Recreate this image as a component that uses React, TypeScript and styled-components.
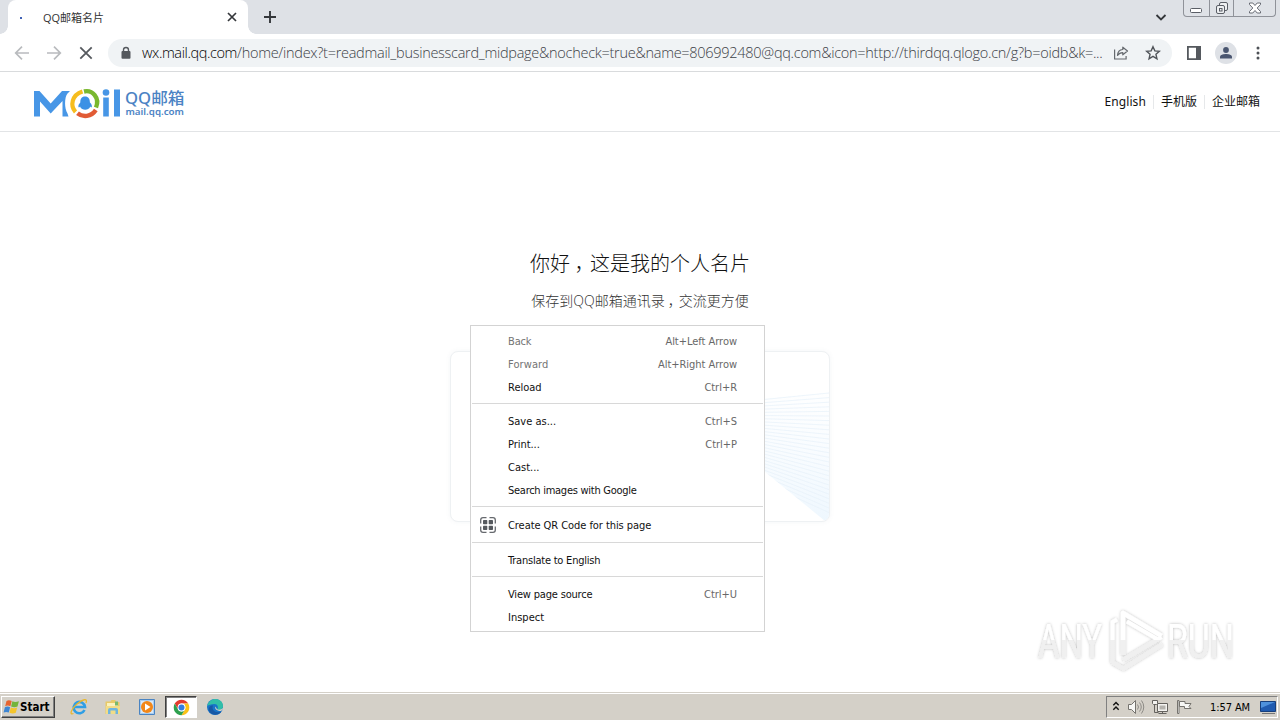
import React from 'react';
import styled, { createGlobalStyle } from 'styled-components';

const GlobalStyle = createGlobalStyle`
    * {
        box-sizing: border-box;
    }

    body {
        margin: 0;
        overflow: hidden;
        background: #fff;
        font-family: 'DejaVu Sans Condensed', 'Noto Sans CJK SC', sans-serif;
        font-size: 11px;
        color: #000;
    }

    svg {
        display: block;
        flex: none;
    }
`;

const Screen = styled.div`
    display: flex;
    flex-direction: column;
    width: 1280px;
    height: 720px;
`;

/* Browser frame */

const TabStrip = styled.div`
    display: flex;
    height: 34px;
    padding-left: 8px;
    background: #dee1e6;
`;

const Tab = styled.div`
    position: relative;
    display: flex;
    align-items: center;
    width: 240px;
    height: 34px;
    padding: 0 10px 0 11px;
    border-radius: 8px 8px 0 0;
    background: #fff;

    &::before,
    &::after {
        content: '';
        position: absolute;
        bottom: 0;
        width: 8px;
        height: 8px;
    }

    &::before {
        left: -8px;
        background: radial-gradient(circle at 0 0, #dee1e6 7.5px, #fff 8px);
    }

    &::after {
        right: -8px;
        background: radial-gradient(circle at 100% 0, #dee1e6 7.5px, #fff 8px);
    }
`;

const LoadingDot = styled.span`
    width: 2px;
    height: 2px;
    margin: 2px 21px 0 1px;
    background: #3f62b5;
`;

const TabTitle = styled.span`
    flex: 1;
    margin-top: -1px;
    font-family: 'Open Sans', 'Noto Sans CJK SC', sans-serif;
    font-size: 11px;
    color: #333;
`;

const NewTab = styled.div`
    display: flex;
    align-items: center;
    flex: 1;
    padding-left: 15px;
`;

const TabSearch = styled.div`
    display: flex;
    align-items: center;
    padding: 0 16px 0 0;
`;

const WindowButtons = styled.div`
    display: flex;
    width: 93px;
    height: 17px;
    margin-right: 4px;
    border: 1px solid #8f9299;
    border-top: 0;
    border-radius: 0 0 4px 4px;
    background: #dfe2e7;
`;

const WindowButton = styled.div<{ $width: number }>`
    display: flex;
    align-items: center;
    justify-content: center;
    width: ${props => props.$width}px;

    & + & {
        border-left: 1px solid #8f9299;
    }
`;

const Toolbar = styled.div`
    display: flex;
    align-items: center;
    height: 38px;
    padding: 0 14px;
    border-bottom: 1px solid #d9dbdd;
    background: #fff;
`;

const NavButtons = styled.div`
    display: flex;
    gap: 16px;
    margin-right: 14px;
`;

const AddressBar = styled.div`
    display: flex;
    align-items: center;
    width: 1064px;
    height: 28px;
    padding: 0 10px 0 12px;
    border-radius: 14px;
    background: #f0f3f5;
`;

const Url = styled.div`
    width: 962px;
    margin: -1px 9px 0 10px;
    font-family: 'Open Sans', sans-serif;
    font-size: 14.5px;
    font-weight: 300;
    letter-spacing: -0.28px;
    white-space: nowrap;
    color: #3c4146;
`;

const Host = styled.span`
    letter-spacing: -0.4px;
    color: #000;
`;

const BarActions = styled.div`
    display: flex;
    gap: 16px;
`;

const ToolbarActions = styled.div`
    display: flex;
    align-items: center;
    gap: 13px;
    margin-left: 14px;
`;

const Avatar = styled.div`
    display: flex;
    align-items: center;
    justify-content: center;
    width: 22px;
    height: 22px;
    border-radius: 50%;
    background: #dee1e6;
`;

/* Mail page */

const PageHeader = styled.header`
    display: flex;
    align-items: center;
    justify-content: space-between;
    height: 60px;
    padding: 0 20px 0 30px;
    border-bottom: 1px solid #e2e4e6;
`;

const HeaderLinks = styled.nav`
    display: flex;
    align-items: center;
    font-family: 'Noto Sans', 'Noto Sans CJK SC', sans-serif;
    font-size: 12px;
    line-height: 14px;
    color: #111;
`;

const HeaderLink = styled.span<{ $spacing?: number }>`
    letter-spacing: ${props => props.$spacing || 0}px;

    & + & {
        margin-left: 7px;
        padding-left: 7px;
        border-left: 1px solid #e6e8ea;
    }
`;

const Main = styled.main`
    display: flex;
    flex: 1;
    flex-direction: column;
    align-items: center;
    padding-top: 117px;
    font-family: 'Open Sans', 'Noto Sans CJK SC', sans-serif;
    font-weight: 300;
`;

const Title = styled.h1`
    margin: 0;
    font-size: 20px;
    font-weight: 300;
    line-height: 30px;
    color: #111;
`;

const Subtitle = styled.p`
    margin: 11px 0 0;
    font-size: 14px;
    line-height: 22px;
    color: #333;
`;

/* Centres the full-width comma in its cell */
const Comma = styled.span`
    margin: 0 -0.22em 0 0.22em;
`;

const CardArea = styled.div`
    position: relative;
    margin-top: 39px;
`;

const Card = styled.div`
    display: flex;
    justify-content: flex-end;
    width: 380px;
    height: 171px;
    overflow: hidden;
    border: 1px solid #eef1f3;
    border-radius: 8px;
    background: #fff;
    box-shadow: 0 0 5px rgba(100, 120, 140, 0.07);
`;

const ContextMenu = styled.div`
    position: absolute;
    top: -26px;
    left: 20px;
    width: 295px;
    height: 307px;
    padding: 4px 1px 0;
    border: 1px solid #d3d3d3;
    background: #fff;
    font-family: 'DejaVu Sans Condensed', sans-serif;
    font-weight: 400;
    font-size: 11px;
`;

const MenuItem = styled.div<{ $disabled?: boolean; $tall?: boolean }>`
    display: flex;
    align-items: center;
    height: ${props => (props.$tall ? 25 : 23)}px;
    padding-right: 26px;
    color: ${props => (props.$disabled ? '#747474' : '#111')};
`;

const MenuIcon = styled.span`
    width: 36px;
    padding: 0 0 1px 8px;
`;

const MenuLabel = styled.span<{ $spacing: number }>`
    flex: 1;
    letter-spacing: ${props => props.$spacing}px;
`;

const Shortcut = styled.span`
    letter-spacing: -0.03px;
    color: #686868;
`;

const Separator = styled.div`
    height: 1px;
    margin: 4px 0 6px;
    background: #d8d8d8;
`;

const Watermark = styled.div`
    position: absolute;
    top: 604px;
    left: 1030px;
`;

/* Windows taskbar */

const Taskbar = styled.footer`
    display: flex;
    align-items: center;
    height: 28px;
    padding: 1px 0 0 1px;
    border-top: 1px solid #d4d0c8;
    background: #d4d0c8;
    box-shadow: inset 0 1px #fff;
`;

const StartButton = styled.div`
    display: flex;
    align-items: center;
    width: 54px;
    height: 22px;
    padding-left: 1px;
    border: 1px solid;
    border-color: #fff #404040 #404040 #fff;
    box-shadow: inset -1px -1px #808080;
    font-family: 'DejaVu Sans Condensed', sans-serif;
    font-size: 11.5px;
    font-weight: 700;
`;

const QuickLaunch = styled.div`
    display: flex;
    flex: 1;
    gap: 2px;
    margin-left: 8px;
`;

const AppButton = styled.div<{ $active?: boolean }>`
    display: flex;
    align-items: center;
    justify-content: center;
    width: 32px;
    height: 22px;
    border: 1px solid ${props => (props.$active ? '#404040' : 'transparent')};
    border-right-color: ${props => (props.$active ? '#fff' : 'transparent')};
    border-bottom-color: ${props => (props.$active ? '#fff' : 'transparent')};
    background: ${props => (props.$active ? '#fff' : 'transparent')};
    box-shadow: ${props => (props.$active ? 'inset 1px 1px #808080' : 'none')};
`;

const Tray = styled.div`
    display: flex;
    align-items: center;
    width: 172px;
    height: 22px;
    margin-right: 2px;
    padding-left: 5px;
    border: 1px solid;
    border-color: #808080 #fff #fff #808080;
`;

const TrayIcons = styled.div`
    display: flex;
    align-items: center;
    gap: 7px;
    flex: 1;
`;

const Clock = styled.span`
    margin-right: 9px;
    letter-spacing: -0.1px;
`;

const ArrowIcon: React.FunctionComponent<{ forward?: boolean }> = ({ forward }) => (
    <svg width="16" height="16" viewBox="0 0 16 16" fill="none" stroke="#b9bbbe" strokeWidth="1.7">
        {forward ? <path d="M1 8h13M8 1.7 14.3 8 8 14.3" /> : <path d="M15 8H2M8 1.7 1.7 8 8 14.3" />}
    </svg>
);

const MailLogo = () => (
    <svg width="160" height="40" viewBox="30 82 160 40">
        <path d="M34 116.500V91h5.500l11.200 12.500L62 91h8l-2.500 2.500c-3.200 4-3.200 15 0 20l1 3H62.500V101l-11.800 12.500L40 101.500v15z" fill="#4796e6" />
        <g fill="none">
            <path d="M75.500 112c-5.500-6-4-17 7-20.500" stroke="#f6bd1e" strokeWidth="4.200" />
            <path d="M84 91.500c8.500-2 16 6.500 12 16" stroke="#79b82f" strokeWidth="4.400" />
            <path d="M95.800 110c-4.500 7-13 7.500-18.300 3.200" stroke="#e15b35" strokeWidth="4.400" />
        </g>
        <path d="M85 96.500c-3.500 0-4.700 2.500-4.700 6-1.500 1.600-2.300 3-1.800 4.700.5.500 1-.2 1.600-.8.5 1.500 1.300 2 2.100 2.500 1.800 1 4.200 1 6 0 .8-.5 1.500-1 2-2.500.6.600 1.200 1.300 1.600.8.500-1.700-.4-3.300-1.900-4.700 0-3.500-1.400-6-4.900-6z" fill="#3c91e5" />
        <circle cx="106" cy="92.500" r="3.300" fill="#4796e6" />
        <path d="M103.200 97.500h5.600v19h-5.600zM114 89.500h6v27h-6z" fill="#4796e6" />
        <text x="125" y="103.500" textLength="59.500" lengthAdjust="spacingAndGlyphs" fontFamily="'Noto Sans', 'Noto Sans CJK SC', sans-serif" fontSize="15.500" fontWeight="500" fill="#4b83c4">QQ邮箱</text>
        <text x="125.500" y="114.500" textLength="58.500" lengthAdjust="spacingAndGlyphs" fontFamily="'Noto Sans', sans-serif" fontSize="9.500" fontWeight="600" fill="#4b83c4">mail.qq.com</text>
    </svg>
);

const rays = Array.from({ length: 27 }, (_, i) => i);

const CardRays = () => (
    <svg width="66" height="169" viewBox="764 352 66 169">
        <defs>
            <linearGradient id="rayFill" x1="0" y1="0" x2="0" y2="1">
                <stop offset="0" stopColor="#f8fcff" stopOpacity="0.2" />
                <stop offset="1" stopColor="#eef7fe" />
            </linearGradient>
            <clipPath id="rayClip">
                <path d="M760 399l70-7v129h-4l-66-54z" />
            </clipPath>
        </defs>
        <path d="M760 399l70-7v129h-4l-66-54z" fill="url(#rayFill)" />
        <g stroke="#e6f1f9" strokeWidth="0.700" clipPath="url(#rayClip)">
            {rays.map(i => (
                <path key={i} d={`M760 ${400 + i * 3.1}L830 ${393 + i * 4.6}`} />
            ))}
        </g>
    </svg>
);

const QrIcon = () => (
    <svg width="16" height="16" viewBox="0 0 16 16">
        <path d="M.7 6.500V3Q.7.7 3 .7h3.500M9.500.7H13q2.300 0 2.300 2.300v3.500M15.300 9.500V13q0 2.300-2.300 2.300H9.500M6.500 15.300H3Q.7 15.300.7 13V9.500" fill="none" stroke="#66696e" strokeWidth="1.300" />
        <g fill="#55595e">
            <rect x="3" y="3" width="4.300" height="4.300" rx=".7" />
            <rect x="8.700" y="3" width="4.300" height="4.300" rx=".7" />
            <rect x="3" y="8.700" width="4.300" height="4.300" rx=".7" />
            <rect x="8.700" y="8.700" width="4.300" height="4.300" rx=".7" />
        </g>
    </svg>
);

const AnyRunMark = () => (
    <svg width="250" height="76" viewBox="1030 604 250 76">
        <defs>
            <filter id="markShadow" x="-10%" y="-20%" width="120%" height="140%">
                <feDropShadow dx="0" dy="0" stdDeviation="1.500" floodColor="#000" floodOpacity="0.280" />
            </filter>
            <linearGradient id="markFill" x1="0" y1="610" x2="0" y2="671" gradientUnits="userSpaceOnUse">
                <stop offset="0.500" stopColor="#fff" />
                <stop offset="0.500" stopColor="#f0f0f0" />
            </linearGradient>
        </defs>
        <g filter="url(#markShadow)">
            <g fontFamily="Roboto, sans-serif" fontSize="48" fontWeight="400" fill="url(#markFill)">
                <text x="1038" y="658" textLength="64" lengthAdjust="spacingAndGlyphs">ANY</text>
                <text x="1167" y="658" textLength="67" lengthAdjust="spacingAndGlyphs">RUN</text>
            </g>
            <g fill="none" stroke="url(#markFill)" strokeWidth="4.500" strokeLinejoin="round">
                <path d="M1123 655V613l38.500 23" />
                <path d="M1127 621.500l32 18.500" strokeWidth="4" />
                <path d="M1123 660l38.500-23" strokeWidth="4" />
                <path d="M1117 619.500l-4.500 2.500v41" strokeWidth="4" />
                <path d="M1112.500 662.500l11 6 38.500-24" strokeWidth="4" />
            </g>
        </g>
    </svg>
);

interface MenuEntry {
    label: string;
    shortcut?: string;
    disabled?: boolean;
    icon?: boolean;
    spacing?: number;
}

const menuGroups: MenuEntry[][] = [
    [
        { label: 'Back', shortcut: 'Alt+Left Arrow', disabled: true },
        { label: 'Forward', shortcut: 'Alt+Right Arrow', disabled: true, spacing: 0.1 },
        { label: 'Reload', shortcut: 'Ctrl+R', spacing: 0 },
    ],
    [
        { label: 'Save as...', shortcut: 'Ctrl+S', spacing: 0 },
        { label: 'Print...', shortcut: 'Ctrl+P', spacing: -0.05 },
        { label: 'Cast...', spacing: 0 },
        { label: 'Search images with Google', spacing: -0.27 },
    ],
    [{ label: 'Create QR Code for this page', icon: true, spacing: -0.06 }],
    [{ label: 'Translate to English', spacing: -0.22 }],
    [{ label: 'View page source', shortcut: 'Ctrl+U', spacing: -0.18 }, { label: 'Inspect', spacing: 0 }],
];

const BrowserFrame = () => (
    <>
        <TabStrip>
            <Tab>
                <LoadingDot />
                <TabTitle>QQ邮箱名片</TabTitle>
                <svg width="12" height="12" viewBox="0 0 12 12" stroke="#34373b" strokeWidth="1.7">
                    <path d="m2 2 8 8M10 2l-8 8" />
                </svg>
            </Tab>
            <NewTab>
                <svg width="14" height="14" viewBox="0 0 14 14" stroke="#34373b" strokeWidth="1.9">
                    <path d="M7 1v12M1 7h12" />
                </svg>
            </NewTab>
            <TabSearch>
                <svg width="12" height="12" viewBox="0 0 12 12" fill="none" stroke="#34373b" strokeWidth="1.8">
                    <path d="m1.500 4 4.500 4.500L10.500 4" />
                </svg>
            </TabSearch>
            <WindowButtons>
                <WindowButton $width={25}>
                    <svg width="14" height="14" viewBox="0 0 14 14" fill="#fff" stroke="#5a5e66">
                        <rect x="1.500" y="7.500" width="11" height="4" rx="1" />
                    </svg>
                </WindowButton>
                <WindowButton $width={25}>
                    <svg width="14" height="14" viewBox="0 0 14 14" fill="#eef0f2" stroke="#5a5e66">
                        <rect x="4.500" y="1.500" width="8" height="8" rx="1.500" />
                        <rect x="1.500" y="4.500" width="8" height="8" rx="1.500" />
                        <rect x="4.500" y="7.500" width="2.500" height="2.500" />
                    </svg>
                </WindowButton>
                <WindowButton $width={42}>
                    <svg width="14" height="12" viewBox="0 0 14 12" fill="#fff" stroke="#5a5e66" strokeWidth=".9">
                        <path d="M1.500 1h3.300L7 3.500 9.200 1h3.300v1.500L9.200 6l3.300 3.500V11H9.200L7 8.500 4.800 11H1.500V9.500L4.800 6 1.500 2.500z" />
                    </svg>
                </WindowButton>
            </WindowButtons>
        </TabStrip>
        <Toolbar>
            <NavButtons>
                <ArrowIcon />
                <ArrowIcon forward />
                <svg width="16" height="16" viewBox="0 0 16 16" stroke="#55595e" strokeWidth="1.8">
                    <path d="m2.300 2.300 11.400 11.400M13.700 2.300 2.300 13.700" />
                </svg>
            </NavButtons>
            <AddressBar>
                <svg width="12" height="14" viewBox="0 0 12 14">
                    <rect x="1.500" y="5" width="9" height="7.700" rx="1" fill="#55595e" />
                    <path d="M3.500 5.500V4a2.500 2.500 0 0 1 5 0v1.500" fill="none" stroke="#55595e" strokeWidth="1.400" />
                </svg>
                <Url>
                    <Host>wx.mail.qq.com</Host>
                    /home/index?t=readmail_businesscard_midpage&amp;nocheck=true&amp;name=806992480@qq.com&amp;icon=http://thirdqq.qlogo.cn/g?b=oidb&amp;k=...
                </Url>
                <BarActions>
                    <svg width="16" height="16" viewBox="0 0 16 16" fill="none" stroke="#65696e" strokeWidth="1.200">
                        <path d="M1.600 4.500V14h11.500v-3" />
                        <path d="M9.800 2.200 14.500 6l-4.700 3.800V7.600c-2.500 0-4 .8-5.300 2.800.2-3.500 2-5.600 5.300-5.900z" strokeLinejoin="round" />
                    </svg>
                    <svg width="16" height="16" viewBox="0 0 16 16" fill="none" stroke="#505459" strokeWidth="1.400">
                        <path d="m8 1.700 1.850 4.200 4.550.4-3.450 3 1 4.450L8 11.400l-3.950 2.350 1-4.450-3.450-3 4.550-.4z" />
                    </svg>
                </BarActions>
            </AddressBar>
            <ToolbarActions>
                <svg width="16" height="16" viewBox="0 0 16 16">
                    <path d="M1.900 1.900h12.200v12.200H1.900z" fill="none" stroke="#55595e" strokeWidth="1.800" />
                    <path d="M10 1h5v14h-5z" fill="#55595e" />
                </svg>
                <Avatar>
                    <svg width="14" height="14" viewBox="0 0 14 14" fill="#4a5670">
                        <circle cx="7" cy="4" r="2.900" />
                        <path d="M1 12.500v-1.600C1 8.800 4.500 8 7 8s6 .8 6 2.900v1.600z" />
                    </svg>
                </Avatar>
                <svg width="16" height="16" viewBox="0 0 16 16" fill="#4d5156">
                    <circle cx="8" cy="3" r="1.500" />
                    <circle cx="8" cy="8" r="1.500" />
                    <circle cx="8" cy="13" r="1.500" />
                </svg>
            </ToolbarActions>
        </Toolbar>
    </>
);

const PageMenu = () => (
    <ContextMenu>
        {menuGroups.map((group, index) => (
            <React.Fragment key={group[0].label}>
                {index > 0 && <Separator />}
                {group.map(item => (
                    <MenuItem key={item.label} $disabled={item.disabled} $tall={item.icon}>
                        <MenuIcon>{item.icon && <QrIcon />}</MenuIcon>
                        <MenuLabel $spacing={item.spacing ?? -0.15}>{item.label}</MenuLabel>
                        {item.shortcut && <Shortcut>{item.shortcut}</Shortcut>}
                    </MenuItem>
                ))}
            </React.Fragment>
        ))}
    </ContextMenu>
);

const WindowsTaskbar = () => (
    <Taskbar>
        <StartButton>
            <svg width="17" height="16" viewBox="0 0 17 16">
                <path d="M3.500 2C5.500.7 7 1.200 8.700 2L7.400 7.200c-1.800-.9-3.500-1-5.200 0z" fill="#e7642f" />
                <path d="M9.400 2.300c2 1 4 .9 6.500-.1l-1.400 5.300c-2.200.9-4.300.8-6.400-.1z" fill="#75b43a" />
                <path d="M1.900 8.200c1.900-1 3.600-.8 5.200 0l-1.300 5.300c-1.700-.8-3.500-.8-5.200 0z" fill="#3e86d3" />
                <path d="M7.800 8.500c2.100 1 4.200 1 6.400.1l-1.400 5.200c-2.200.9-4.300.8-6.300-.1z" fill="#f5c52c" />
            </svg>
            Start
        </StartButton>
        <QuickLaunch>
            <AppButton>
                <svg width="18" height="18" viewBox="0 0 18 18" fill="none">
                    <path d="M14.500 12A5.700 5.700 0 1 1 15 9H5" stroke="#2f9ee5" strokeWidth="2.600" />
                    <path d="M3.500 15.500C-1 17.500 1 11 7 6s11-6 9-1" stroke="#e9b72c" strokeWidth="1.300" />
                </svg>
            </AppButton>
            <AppButton>
                <svg width="18" height="18" viewBox="0 0 18 18">
                    <path d="M1.500 3.500h5l1-1.500h4v2h4v12h-14z" fill="#e8c967" />
                    <path d="M3 5h11v5H3z" fill="#fbf2bc" />
                    <path d="M11 3.500h3v4h-3z" fill="#79b96c" />
                    <path d="M2 8h14v8H2z" fill="#f2dc87" />
                    <path d="M4 16v-4q0-2 2-2h6q2 0 2 2v4h-2.500v-3.500h-5V16z" fill="#6fb5df" />
                </svg>
            </AppButton>
            <AppButton>
                <svg width="18" height="18" viewBox="0 0 18 18">
                    <path d="M1.500 1.500h15v15h-15z" fill="#a8cdf0" stroke="#4a84c2" />
                    <path d="M3 3h12v12H3z" fill="#d9e9f8" />
                    <circle cx="9" cy="9" r="6" fill="#f28718" />
                    <path d="m7 5.500 5.500 3.500L7 12.500z" fill="#fff" />
                </svg>
            </AppButton>
            <AppButton $active>
                <svg width="17" height="17" viewBox="0 0 48 48">
                    <circle cx="24" cy="24" r="22" fill="#fff" />
                    <path d="M4.950 13A22 22 0 0 1 43.050 13H24a11 11 0 0 0-9.530 5.500v11z" fill="#e33b2e" />
                    <path d="M43.050 13A22 22 0 0 1 24 46l9.530-16.500A11 11 0 0 0 33.530 18.500L30 13z" fill="#fbc116" />
                    <path d="M24 46A22 22 0 0 1 4.950 13l9.520 16.500A11 11 0 0 0 33.530 29.500z" fill="#2da04e" />
                    <circle cx="24" cy="24" r="11" fill="#fff" />
                    <circle cx="24" cy="24" r="8.500" fill="#347de0" />
                </svg>
            </AppButton>
            <AppButton>
                <svg width="18" height="18" viewBox="0 0 18 18">
                    <circle cx="9" cy="9" r="8" fill="#1874c8" />
                    <path d="M1.200 8C2.500 3 6 1 9.500 1c5 0 7.800 4 7.500 7.500-.3 3-3 4-6 3 2-2 .7-5.500-2.500-5.500C5 6 2.500 7 1.200 8z" fill="#31bea8" />
                    <path d="M7 7.500c-2 5 3 8 8.500 6-3 4.500-10 4.500-12.500-.5C2 9.500 4 7.500 7 7.500z" fill="#1758a5" />
                    <path d="M9.500 8.500c-1 2 .5 4.500 5.500 4.500l2-1.700V10c-1.500 1.700-4 2-6 1.300z" fill="#d4d0c8" />
                </svg>
            </AppButton>
        </QuickLaunch>
        <Tray>
            <TrayIcons>
                <svg width="8" height="12" viewBox="0 0 8 12" fill="none" stroke="#111" strokeWidth="1.400">
                    <path d="m1.300 4.200 2.700-2.700 2.700 2.700M1.300 8.700 4 6l2.700 2.700" />
                </svg>
                <svg width="18" height="16" viewBox="0 0 18 16" fill="none" stroke="#75736e">
                    <path d="M1.500 5.500h3l4-4v13l-4-4h-3z" fill="#f7f7f5" />
                    <path d="M10.500 5.500q2 2.500 0 5M12.500 3.500q3.500 4.500 0 9M14.500 1.500q4.500 6.500 0 13" stroke="#8d8b86" />
                </svg>
                <svg width="17" height="16" viewBox="0 0 17 16" fill="#f4f3f0" stroke="#65635f">
                    <path d="M5.500 4.500h10v8h-10zM6.500 14.500h8M10.500 12.500v2" />
                    <path d="M7.500 6.500h6v4h-6z" fill="#b5b3ae" stroke="none" />
                    <path d="M2.500 5.500v8h4" fill="none" />
                    <path d="M.5 1.500h5v3l-1 1h-3l-1-1z" />
                </svg>
                <svg width="18" height="16" viewBox="0 0 18 16" fill="#f7f7f5" stroke="#75736e">
                    <path d="M1.500 1.500h1.500v13H1.500zM3.500 2.500H9v2h6l-2 3 2 2H8.500v-2h-5z" />
                </svg>
            </TrayIcons>
            <Clock>1:57 AM</Clock>
            <svg width="18" height="16" viewBox="0 0 18 16">
                <path d="M1.500 2.500h15v10h-15z" fill="#205bb0" stroke="#173f7c" />
                <path d="M2 3h14L2 9z" fill="#4e91dc" />
                <path d="M3 14.500h13" stroke="#777" />
            </svg>
        </Tray>
    </Taskbar>
);

const App = () => (
    <Screen>
        <GlobalStyle />
        <BrowserFrame />
        <PageHeader>
            <MailLogo />
            <HeaderLinks>
                <HeaderLink $spacing={0.1}>English</HeaderLink>
                <HeaderLink>手机版</HeaderLink>
                <HeaderLink>企业邮箱</HeaderLink>
            </HeaderLinks>
        </PageHeader>
        <Main>
            <Title>
                你好<Comma>，</Comma>这是我的个人名片
            </Title>
            <Subtitle>
                保存到QQ邮箱通讯录<Comma>，</Comma>交流更方便
            </Subtitle>
            <CardArea>
                <Card>
                    <CardRays />
                </Card>
                <PageMenu />
            </CardArea>
        </Main>
        <Watermark>
            <AnyRunMark />
        </Watermark>
        <WindowsTaskbar />
    </Screen>
);

export default App;
